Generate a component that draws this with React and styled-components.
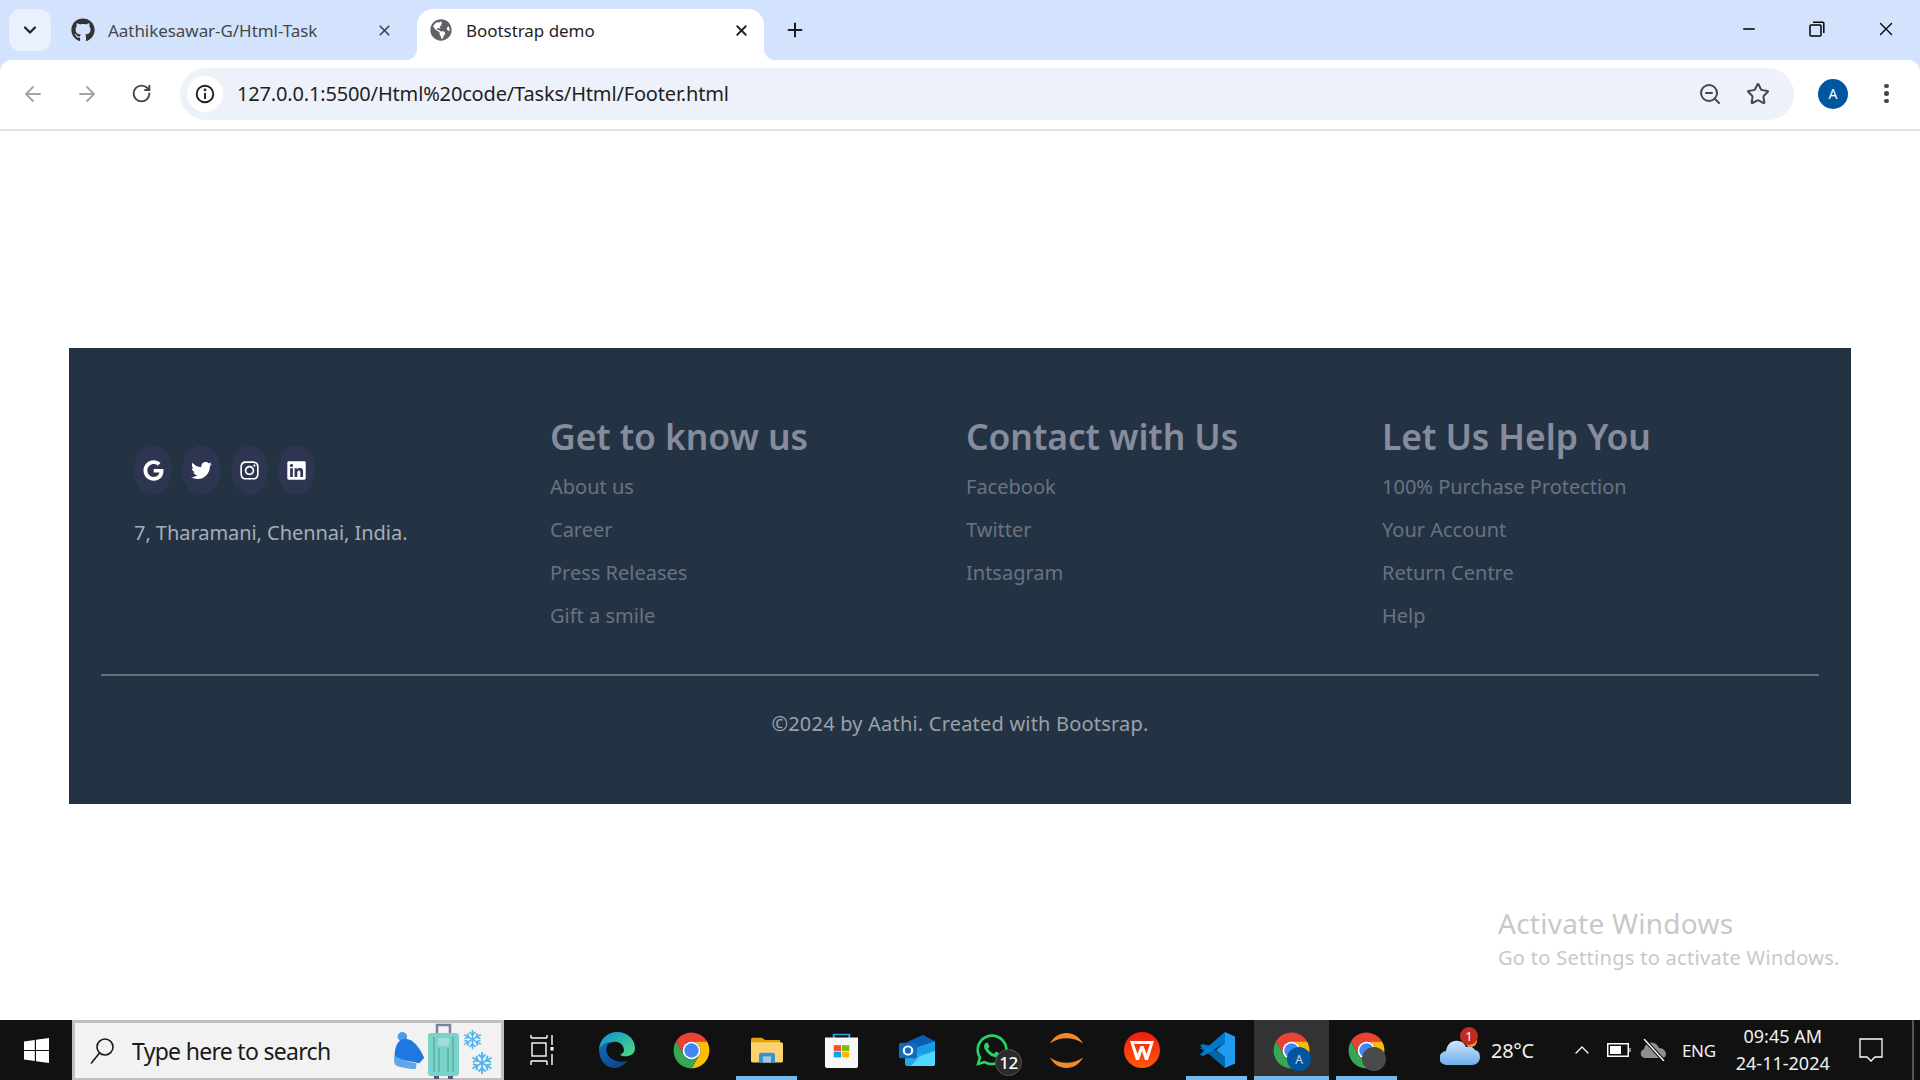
import styled, { createGlobalStyle } from "styled-components";
import { ArrowLeft, ArrowRight, RotateCw, Star, ZoomOut, X, Plus, ChevronDown, ChevronUp, Minus } from "lucide-react";
import { FaGoogle, FaTwitter, FaInstagram, FaLinkedin, FaGithub, FaGlobeAmericas, FaWhatsapp } from "react-icons/fa";

const GlobalStyle = createGlobalStyle`
  * { margin: 0; padding: 0; box-sizing: border-box; }
  html, body { width: 100%; height: 100%; overflow: hidden; background: #fff; }
  body { font-family: "Noto Sans", "Open Sans", sans-serif; }
`;

const Screen = styled.div`
  width: 1920px;
  height: 1080px;
  display: flex;
  flex-direction: column;
  position: relative;
`;

/* browser chrome */
const TabStrip = styled.div`
  height: 60px;
  flex: none;
  background: #d3e3fd;
  display: flex;
  align-items: flex-end;
  padding-left: 9px;
`;
const TabSearch = styled.div`
  width: 42px;
  height: 42px;
  margin-bottom: 9px;
  border-radius: 12px;
  background: #e9f0fe;
  display: flex;
  align-items: center;
  justify-content: center;
  color: #1f1f1f;
`;
const Tab = styled.div`
  position: relative;
  width: ${p => p.$width}px;
  height: 51px;
  padding: 0 ${p => p.$active ? 14.5 : 24.5}px 9px ${p => p.$active ? 12 : 9}px;
  margin-left: ${p => p.$left}px;
  display: flex;
  align-items: center;
  border-radius: 16px 16px 0 0;
  background: ${p => p.$active ? "#fff" : "transparent"};
  color: ${p => p.$active ? "#1f1f1f" : "#474747"};
  ${p => p.$active && `
    &::before, &::after {
      content: "";
      position: absolute;
      bottom: 0;
      width: 12px;
      height: 12px;
    }
    &::before { left: -12px; background: radial-gradient(circle at 0 0, #d3e3fd 12px, #fff 12.5px); }
    &::after { right: -12px; background: radial-gradient(circle at 100% 0, #d3e3fd 12px, #fff 12.5px); }
  `}
`;
const TabIcon = styled.span`
  width: 24px;
  height: 24px;
  flex: none;
  display: flex;
  align-items: center;
  justify-content: center;
  color: ${p => p.$color};
`;
const TabTitle = styled.span`
  flex: 1;
  margin-left: 13px;
  font-size: 17px;
  letter-spacing: -0.05px;
  white-space: nowrap;
`;
const TabClose = styled.span`
  display: flex;
  align-items: center;
  color: inherit;
`;
const NewTab = styled.div`
  margin: 0 0 11px 12px;
  height: 38px;
  width: 38px;
  display: flex;
  align-items: center;
  justify-content: center;
  color: #1f1f1f;
`;
const WindowButtons = styled.div`
  margin-left: auto;
  align-self: stretch;
  display: flex;
`;
const WindowButton = styled.div`
  width: 68.5px;
  padding-bottom: 2px;
  display: flex;
  align-items: center;
  justify-content: center;
  color: #000;
`;
const Toolbar = styled.div`
  height: 71px;
  flex: none;
  background: #d3e3fd;
`;
const ToolbarInner = styled.div`
  height: 100%;
  background: #fff;
  border-radius: 12px 12px 0 0;
  border-bottom: 2px solid #e3e3e3;
  display: flex;
  align-items: center;
  padding: 0 0 2px 11px;
`;
const NavButton = styled.div`
  width: 44px;
  height: 44px;
  margin-right: ${p => p.$gap || 10}px;
  display: flex;
  align-items: center;
  justify-content: center;
  color: ${p => p.$dim ? "#a3a4a6" : "#474747"};
`;
const Omnibox = styled.div`
  width: 1614px;
  height: 52px;
  padding: 0 4px 0 7px;
  border-radius: 26px;
  background: #edf2fa;
  display: flex;
  align-items: center;
`;
const SiteInfo = styled.div`
  width: 36px;
  height: 36px;
  border-radius: 50%;
  background: #fff;
  display: flex;
  align-items: center;
  justify-content: center;
`;
const Url = styled.div`
  margin-left: 14px;
  font-size: 20px;
  letter-spacing: -0.16px;
  color: #1f1f1f;
  white-space: nowrap;
`;
const OmniActions = styled.div`
  margin-left: auto;
  display: flex;
  align-items: center;
  gap: 24px;
  padding-right: 20px;
  color: #474747;
`;
const Avatar = styled.div`
  width: 30px;
  height: 30px;
  margin-left: 24px;
  border-radius: 50%;
  background: #00579f;
  color: #fff;
  font-size: 14px;
  display: flex;
  align-items: center;
  justify-content: center;
`;
const Kebab = styled.div`
  margin-left: 36px;
  display: flex;
  flex-direction: column;
  gap: 3px;
  & > i {
    display: block;
    width: 4.5px;
    height: 4.5px;
    border-radius: 50%;
    background: #474747;
  }
`;

/* page */
const Content = styled.main`
  flex: 1;
  padding: 217px 69px 0;
`;
const Footer = styled.footer`
  height: 456px;
  padding: 0 32px;
  background: #243343;
  display: flex;
  flex-direction: column;
`;
const FooterGrid = styled.div`
  display: grid;
  grid-template-columns: 449px repeat(3, 416px);
  height: 328px;
  border-bottom: 2px solid #68717e;
`;
const Brand = styled.div`
  padding: 97px 0 0 33px;
`;
const Socials = styled.div`
  display: flex;
  gap: 10px;
`;
const SocialLink = styled.a`
  width: ${p => p.$w}px;
  height: 50px;
  border-radius: 50%;
  background: #2d3550;
  color: #fff;
  font-size: 21px;
  display: flex;
  align-items: center;
  justify-content: center;
`;
const Address = styled.p`
  margin-top: 24px;
  font-size: 20px;
  line-height: 28px;
  letter-spacing: -0.05px;
  color: #a7adb6;
`;
const Column = styled.div`
  padding-top: 64px;
`;
const ColumnTitle = styled.h3`
  font-size: 35.5px;
  font-weight: 600;
  line-height: 48px;
  letter-spacing: -0.1px;
  color: #878c9c;
`;
const LinkList = styled.ul`
  list-style: none;
  margin-top: 5px;
`;
const LinkItem = styled.li`
  height: 43px;
  line-height: 43px;
  font-size: 20px;
  color: #6a7280;
`;
const Copyright = styled.p`
  margin-top: 33px;
  text-align: center;
  font-size: 20px;
  line-height: 30px;
  letter-spacing: 0.2px;
  color: #9aa1aa;
`;
const Watermark = styled.div`
  position: absolute;
  left: 1498px;
  top: 904px;
  color: #c8c8c8;
  pointer-events: none;
`;
const WatermarkTitle = styled.div`
  font-size: 28px;
  line-height: 38px;
  letter-spacing: 0.25px;
`;
const WatermarkText = styled.div`
  font-size: 20px;
  line-height: 32px;
  letter-spacing: 0.3px;
`;

/* taskbar */
const Taskbar = styled.div`
  height: 60px;
  flex: none;
  background: #111;
  display: flex;
  color: #fff;
`;
const StartButton = styled.div`
  width: 72px;
  flex: none;
  display: flex;
  align-items: center;
  justify-content: center;
`;
const SearchBox = styled.div`
  width: 432px;
  flex: none;
  position: relative;
  border: 3px solid #bfbfbf;
  border-bottom-width: 2px;
  background: #f2f2f2;
  color: #1a1a1a;
  display: flex;
  align-items: center;
  padding-left: 13px;
`;
const SearchText = styled.span`
  margin-left: 16px;
  font-size: 23px;
  letter-spacing: -0.7px;
`;
const SearchArt = styled.div`
  position: absolute;
  right: 7px;
  top: -1px;
  bottom: -2px;
  display: flex;
  align-items: center;
  gap: 3px;
`;
const Flakes = styled.div`
  width: 32px;
  display: flex;
  flex-direction: column;
  gap: 1px;
  padding-top: 2px;
  & > svg:last-child { margin-left: 8px; }
`;
const TaskCell = styled.div`
  width: 75px;
  flex: none;
  position: relative;
  display: flex;
  align-items: center;
  justify-content: center;
  background: ${p => p.$active ? "#333" : "transparent"};
  &::after {
    content: "";
    display: ${p => p.$open ? "block" : "none"};
    position: absolute;
    bottom: 0;
    left: ${p => p.$active ? 0 : 7}px;
    right: ${p => p.$active ? 0 : 7}px;
    height: 4px;
    background: #76b9ed;
  }
`;
const CountBadge = styled.span`
  position: absolute;
  left: 41px;
  top: 29px;
  width: 27px;
  height: 27px;
  border-radius: 50%;
  border: 1px solid #555;
  background: #2b2b2b;
  font-size: 17px;
  font-weight: 500;
  letter-spacing: -0.5px;
  display: flex;
  align-items: center;
  justify-content: center;
`;
const ProfileBadge = styled.span`
  position: absolute;
  left: 33px;
  top: 27px;
  width: 24px;
  height: 24px;
  border-radius: 50%;
  background: ${p => p.$bg};
  color: #c8d8ea;
  font-size: 12px;
  display: flex;
  align-items: center;
  justify-content: center;
`;
const Tray = styled.div`
  flex: 1;
  min-width: 0;
  display: flex;
  align-items: center;
  padding-left: 36px;
`;
const Weather = styled.div`
  position: relative;
  width: 40px;
  height: 40px;
  flex: none;
  margin-top: 6px;
`;
const AlertDot = styled.span`
  position: absolute;
  left: 20px;
  top: -6px;
  width: 18px;
  height: 18px;
  border-radius: 50%;
  background: #c42b1c;
  font-size: 12px;
  display: flex;
  align-items: center;
  justify-content: center;
`;
const TrayText = styled.span`
  margin-left: ${p => p.$left}px;
  font-size: ${p => p.$size}px;
  letter-spacing: -0.3px;
  color: #f0f0f0;
  white-space: nowrap;
`;
const TrayIcon = styled.span`
  margin-left: ${p => p.$left}px;
  display: flex;
  align-items: center;
`;
const Clock = styled.div`
  margin-left: 1px;
  width: 132px;
  flex: none;
  text-align: center;
  font-size: 18px;
  line-height: 27px;
  color: #f0f0f0;
`;
const Notification = styled.span`
  margin-left: 10px;
  display: flex;
`;
const EdgeLine = styled.span`
  margin-left: auto;
  margin-right: 6px;
  align-self: stretch;
  width: 2px;
  background: #555;
`;

/* drawings */
const ChromeLogo = () => (
  <svg width="43" height="43" viewBox="0 0 48 48">
    <path fill="#ea4335" d="M24 4C16.600 4 10.100 8 6.700 14l8.600 15A10 10 0 0 1 24 14h17.300C37.900 8 31.400 4 24 4z" />
    <path fill="#fbbc04" d="M41.300 14H24a10 10 0 0 1 8.660 15L24 44c11 0 20-9 20-20 0-3.600-1-7.100-2.700-10z" />
    <path fill="#34a853" d="M6.700 14A20 20 0 0 0 24 44l8.660-15A10 10 0 0 1 15.300 29z" />
    <circle cx="24" cy="24" r="10" fill="#fff" />
    <circle cx="24" cy="24" r="8" fill="#4285f4" />
  </svg>
);

const WindowsLogo = () => (
  <svg width="25" height="25" viewBox="0 0 25 25" fill="#fff">
    <path d="M0 3.600 10.800 2v9.900H0zM12 1.800 25 0v11.900H12zM0 13.100h10.800V23L0 21.400zM12 13.100h13V25l-13-1.800z" />
  </svg>
);

const TaskView = () => (
  <svg width="24" height="32" viewBox="0 0 24 32" fill="none" stroke="#fff" strokeWidth="1.400">
    <path d="M1 4h16M1 1v3M17 1v3" />
    <rect x="2" y="9" width="14" height="13" />
    <path d="M1 27h16M1 27v4M17 27v4M22 1v10M22 20v11" />
    <rect x="20.500" y="13" width="3" height="3.500" fill="#fff" stroke="none" />
  </svg>
);

const EdgeLogo = () => (
  <svg width="36" height="36" viewBox="0 0 38 40" preserveAspectRatio="none">
    <defs>
      <linearGradient id="edgeTop" x1="0" y1="0" x2="1" y2="1">
        <stop offset="0" stopColor="#0c8dd8" />
        <stop offset="1" stopColor="#4fdc7c" />
      </linearGradient>
      <linearGradient id="edgeBottom" x1="0" y1="0" x2="1" y2="1">
        <stop offset="0" stopColor="#0f6cbd" />
        <stop offset="1" stopColor="#0a3f80" />
      </linearGradient>
    </defs>
    <path fill="url(#edgeTop)" d="M19 0C31 0 38 9 38 18c0 6-5 9-10 9-3 0-5-1-6-2 4-1 5-4 4-7-1-5-6-8-11-7C8 12 2 16 0 19 1 8 9 0 19 0z" />
    <path fill="url(#edgeBottom)" d="M0 19c2-4 7-8 13-8-4 2-6 6-5 11 2 9 13 13 22 10-3 5-8 8-14 8C7 40 0 31 0 19z" />
  </svg>
);

const FolderIcon = () => (
  <svg width="32" height="27" viewBox="0 0 32 36" preserveAspectRatio="none">
    <path fill="#e0a30c" d="M0 3a2 2 0 0 1 2-2h9l3 3h15v5H0z" />
    <path fill="#fcd36c" d="M0 7h30a2 2 0 0 1 2 2v23a2 2 0 0 1-2 2H2a2 2 0 0 1-2-2z" />
    <path fill="#3a8fd8" d="M8 34V24a3 3 0 0 1 3-3h10a3 3 0 0 1 3 3v10h-4v-8h-8v8z" />
    <rect x="12" y="27" width="8" height="7" fill="#8fcdf5" />
  </svg>
);

const StoreIcon = () => (
  <svg width="35" height="35" viewBox="0 0 36 46" preserveAspectRatio="none">
    <path fill="none" stroke="#2aa5e8" strokeWidth="2" d="M10 9V2h16v7" />
    <path fill="#f7f7f7" d="M1 6h34v37a3 3 0 0 1-3 3H4a3 3 0 0 1-3-3z" />
    <rect x="10" y="16" width="7.500" height="7.500" fill="#f25022" />
    <rect x="18.500" y="16" width="7.500" height="7.500" fill="#7fba00" />
    <rect x="10" y="24.500" width="7.500" height="7.500" fill="#00a4ef" />
    <rect x="18.500" y="24.500" width="7.500" height="7.500" fill="#ffb900" />
  </svg>
);

const OutlookIcon = () => (
  <svg width="36" height="31" viewBox="0 0 36 40" preserveAspectRatio="none">
    <path fill="#0a5fb4" d="M8 9 24 0l12 8v12H8z" />
    <path fill="#1b9de2" d="M8 20 36 8v12L14 32H8z" />
    <path fill="#28a8ea" d="M6 24h30v13a3 3 0 0 1-3 3H9a3 3 0 0 1-3-3z" />
    <path fill="#50d9ff" d="M20 28 36 20v17a3 3 0 0 1-3 3H12z" />
    <rect x="0" y="10" width="18" height="20" rx="2" fill="#0f6cbd" />
    <ellipse cx="9" cy="20" rx="4.200" ry="5.400" fill="none" stroke="#fff" strokeWidth="2.200" />
  </svg>
);

const HaloIcon = () => (
  <svg width="35" height="35" viewBox="0 0 36 40" fill="#f08a2c" preserveAspectRatio="none">
    <path d="M1 12C5 4 11 0 18 0s13 4 17 12c-5-4-11-6-17-6S6 8 1 12z" />
    <path d="M1 28c5 4 11 6 17 6s12-2 17-6c-4 8-10 12-17 12S5 36 1 28z" />
  </svg>
);

const WpsIcon = () => (
  <svg width="36" height="36" viewBox="0 0 36 36">
    <defs>
      <linearGradient id="wpsFill" x1="0" y1="0" x2="0" y2="1">
        <stop offset="0" stopColor="#f01b10" />
        <stop offset="1" stopColor="#ff5a0a" />
      </linearGradient>
    </defs>
    <circle cx="18" cy="18" r="18" fill="url(#wpsFill)" />
    <path d="M6 9h24l-6 19h-3l-3-9-3 9h-3zM10 12l3.500 10 3-8h3l3 8L26 12z" fill="#fff" fillRule="evenodd" />
  </svg>
);

const VsCodeIcon = () => (
  <svg width="36" height="36" viewBox="0 0 36 40" preserveAspectRatio="none">
    <path fill="#0065a9" d="M26 28 9 14l-5 2-3 2 8 6 17 16z" />
    <path fill="#0079cc" d="M26 0 9 16l-5-3-3 2 5 5-5 5 3 2 5-3L26 12z" />
    <path fill="#1f9cf0" d="M26 0 36 5v30l-10 5V28l-9-8 9-8z" />
  </svg>
);

const Hat = () => (
  <svg width="32" height="38" viewBox="0 0 32 40">
    <circle cx="9" cy="5" r="5" fill="#4a9bea" />
    <path fill="#1f78e0" d="M1 28C0 15 5 7 12 7c8 0 15 9 20 20l-5 6z" />
    <path fill="#5fa5ec" d="M1 25c8 5 17 7 23 8l-1 6C15 39 6 37 2 35 0 33 0 28 1 25z" />
  </svg>
);

const Suitcase = () => (
  <svg width="31" height="56" viewBox="0 0 31 56">
    <path fill="none" stroke="#7c7fa0" strokeWidth="2.500" d="M9 12V2h13v10" />
    <rect x="6" y="52" width="5" height="4" fill="#5c5a80" />
    <rect x="20" y="52" width="5" height="4" fill="#5c5a80" />
    <rect x="0" y="10" width="31" height="43" rx="3" fill="#7ad2c8" />
    <rect x="10" y="15" width="11" height="8" rx="1" fill="#a5dcd6" />
    <path stroke="#4fa89f" strokeWidth="1.200" d="M6 14v35M11 25v24M20 25v24M25 14v35" />
  </svg>
);

const Snowflake = ({ size }) => (
  <svg width={size} height={size} viewBox="0 0 24 24" fill="none" stroke="#4fb4f0" strokeWidth="1.800">
    {[0, 60, 120].map(a => (
      <g key={a} transform={`rotate(${a} 12 12)`}>
        <path d="M12 1v22M8.500 3.500 12 7l3.500-3.500M8.500 20.500 12 17l3.500 3.500" />
      </g>
    ))}
  </svg>
);

const SearchGlyph = () => (
  <svg width="28" height="28" viewBox="0 0 28 28" fill="none" stroke="#1a1a1a" strokeWidth="1.600">
    <circle cx="17" cy="10" r="8" />
    <path d="M11.500 16 3 26.500" />
  </svg>
);

const Cloud = () => (
  <svg width="40" height="34" viewBox="0 0 40 34">
    <defs>
      <linearGradient id="cloudFill" x1="0" y1="0" x2="0" y2="1">
        <stop offset="0" stopColor="#cfe4fb" />
        <stop offset="1" stopColor="#6fb0ec" />
      </linearGradient>
    </defs>
    <circle cx="31" cy="8" r="6" fill="#f29a2e" />
    <path fill="url(#cloudFill)" d="M7 32a7 7 0 0 1-1-14c1-7 6-11 12-10 4 0 7 3 8 6 2-1 7-1 9 3 4 1 5 4 5 7 0 5-4 8-8 8z" />
  </svg>
);

const Battery = () => (
  <svg width="24" height="14" viewBox="0 0 24 14">
    <rect x="0.750" y="0.750" width="20.500" height="12.500" fill="none" stroke="#fff" strokeWidth="1.500" />
    <rect x="3" y="3" width="11" height="8" fill="#fff" />
    <rect x="22" y="5" width="2" height="4" fill="#888" />
  </svg>
);

const OneDrive = () => (
  <svg width="26" height="22" viewBox="0 0 26 22">
    <path fill="#8f8f8f" d="M5 19a4.500 4.500 0 0 1-1-8.800C5 5 9 2 14 4c3 1 4 3 5 5 4 0 7 3 7 6s-2 4-5 4z" />
    <path stroke="#111" strokeWidth="3.500" d="M4 0l20 22" />
    <path stroke="#fff" strokeWidth="1.400" d="M4 0l20 22" />
  </svg>
);

const ActionCenter = () => (
  <svg width="24" height="24" viewBox="0 0 24 24" fill="none" stroke="#fff" strokeWidth="1.300">
    <path d="M1 1h22v18h-7l-4 4-4-4H1z" />
  </svg>
);

const Restore = () => (
  <svg width="16" height="16" viewBox="0 0 16 16" fill="none" stroke="#000" strokeWidth="1.500">
    <rect x="1" y="4" width="11" height="11" rx="1" />
    <path d="M4 1.200h9.800a1 1 0 0 1 1 1V12" />
  </svg>
);

const InfoMark = () => (
  <svg width="20" height="20" viewBox="0 0 20 20" fill="none" stroke="#1f1f1f" strokeWidth="1.900">
    <circle cx="10" cy="10" r="8.300" />
    <path d="M10 9v6" />
    <circle cx="10" cy="5.900" r="0.500" />
  </svg>
);

const columns = [
  { title: "Get to know us", links: ["About us", "Career", "Press Releases", "Gift a smile"] },
  { title: "Contact with Us", links: ["Facebook", "Twitter", "Intsagram"] },
  { title: "Let Us Help You", links: ["100% Purchase Protection", "Your Account", "Return Centre", "Help"] },
];

const socials = [
  { icon: <FaGoogle />, w: 38 },
  { icon: <FaTwitter />, w: 39 },
  { icon: <FaInstagram />, w: 37 },
  { icon: <FaLinkedin />, w: 37 },
];

export default function App() {
  return (
    <Screen>
      <GlobalStyle />
      <TabStrip>
        <TabSearch><ChevronDown size={20} strokeWidth={2.6} /></TabSearch>
        <Tab $width={355} $left={11}>
          <TabIcon $color="#333"><FaGithub size={24} /></TabIcon>
          <TabTitle>Aathikesawar-G/Html-Task</TabTitle>
          <TabClose><X size={17} strokeWidth={2.4} /></TabClose>
        </Tab>
        <Tab $width={347} $active $left={0}>
          <TabIcon $color="#5f6368"><FaGlobeAmericas size={22} /></TabIcon>
          <TabTitle>Bootstrap demo</TabTitle>
          <TabClose><X size={17} strokeWidth={2.6} /></TabClose>
        </Tab>
        <NewTab><Plus size={22} strokeWidth={2.2} /></NewTab>
        <WindowButtons>
          <WindowButton><Minus size={18} strokeWidth={2} /></WindowButton>
          <WindowButton><Restore /></WindowButton>
          <WindowButton><X size={22} strokeWidth={1.5} /></WindowButton>
        </WindowButtons>
      </TabStrip>

      <Toolbar>
        <ToolbarInner>
          <NavButton $dim><ArrowLeft size={24} strokeWidth={1.8} /></NavButton>
          <NavButton $dim><ArrowRight size={24} strokeWidth={1.8} /></NavButton>
          <NavButton $gap={17}><RotateCw size={21} strokeWidth={2.2} /></NavButton>
          <Omnibox>
            <SiteInfo><InfoMark /></SiteInfo>
            <Url>127.0.0.1:5500/Html%20code/Tasks/Html/Footer.html</Url>
            <OmniActions>
              <ZoomOut size={24} strokeWidth={2} />
              <Star size={24} strokeWidth={2} />
            </OmniActions>
          </Omnibox>
          <Avatar>A</Avatar>
          <Kebab><i /><i /><i /></Kebab>
        </ToolbarInner>
      </Toolbar>

      <Content>
        <Footer>
          <FooterGrid>
            <Brand>
              <Socials>
                {socials.map((s, i) => (
                  <SocialLink key={i} $w={s.w}>{s.icon}</SocialLink>
                ))}
              </Socials>
              <Address>7, Tharamani, Chennai, India.</Address>
            </Brand>
            {columns.map(col => (
              <Column key={col.title}>
                <ColumnTitle>{col.title}</ColumnTitle>
                <LinkList>
                  {col.links.map(link => <LinkItem key={link}>{link}</LinkItem>)}
                </LinkList>
              </Column>
            ))}
          </FooterGrid>
          <Copyright>©2024 by Aathi. Created with Bootsrap.</Copyright>
        </Footer>
      </Content>

      <Watermark>
        <WatermarkTitle>Activate Windows</WatermarkTitle>
        <WatermarkText>Go to Settings to activate Windows.</WatermarkText>
      </Watermark>

      <Taskbar>
        <StartButton><WindowsLogo /></StartButton>
        <SearchBox>
          <SearchGlyph />
          <SearchText>Type here to search</SearchText>
          <SearchArt>
            <Hat />
            <Suitcase />
            <Flakes>
              <Snowflake size={21} />
              <Snowflake size={24} />
            </Flakes>
          </SearchArt>
        </SearchBox>
        <TaskCell><TaskView /></TaskCell>
        <TaskCell><EdgeLogo /></TaskCell>
        <TaskCell><ChromeLogo /></TaskCell>
        <TaskCell $open><FolderIcon /></TaskCell>
        <TaskCell><StoreIcon /></TaskCell>
        <TaskCell><OutlookIcon /></TaskCell>
        <TaskCell>
          <FaWhatsapp size={36} color="#25d366" />
          <CountBadge>12</CountBadge>
        </TaskCell>
        <TaskCell><HaloIcon /></TaskCell>
        <TaskCell><WpsIcon /></TaskCell>
        <TaskCell $open><VsCodeIcon /></TaskCell>
        <TaskCell $open $active>
          <ChromeLogo />
          <ProfileBadge $bg="#00579f">A</ProfileBadge>
        </TaskCell>
        <TaskCell $open>
          <ChromeLogo />
          <ProfileBadge $bg="#4a4a4a" />
        </TaskCell>
        <Tray>
          <Weather>
            <Cloud />
            <AlertDot>1</AlertDot>
          </Weather>
          <TrayText $left={11} $size={20}>28°C</TrayText>
          <TrayIcon $left={36}><ChevronUp size={24} strokeWidth={1.3} /></TrayIcon>
          <TrayIcon $left={13}><Battery /></TrayIcon>
          <TrayIcon $left={9}><OneDrive /></TrayIcon>
          <TrayText $left={16} $size={17}>ENG</TrayText>
          <Clock>
            <div>09:45 AM</div>
            <div>24-11-2024</div>
          </Clock>
          <Notification><ActionCenter /></Notification>
          <EdgeLine />
        </Tray>
      </Taskbar>
    </Screen>
  );
}
